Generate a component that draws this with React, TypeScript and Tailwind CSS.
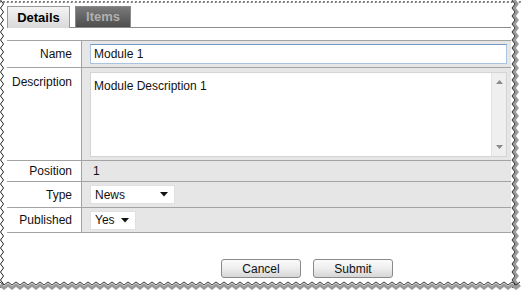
import { ReactNode } from "react";

const zig = (n: number, step: number, amp: number, vertical: boolean, offset: number) => {
    const pts: string[] = [];
    for (let i = 0; i <= n; i++) {
        const a = i * step;
        const b = offset + (i % 2 === 0 ? 0 : amp);
        pts.push(vertical ? `${b},${a}` : `${a},${b}`);
    }
    return pts.join(" ");
};

const Row = ({ label, top, children, h }: { label: string; top?: boolean; children: ReactNode; h: string }) => (
    <div className={`flex border-b border-[#a3a3a3] ${h}`}>
        <div className={`w-[75px] shrink-0 border-r border-[#a3a3a3] bg-white pr-[9px] text-right text-[12px] text-[#111] flex ${top ? "items-start pt-[5px]" : "items-center"}`}>
            <span className="w-full">{label}</span>
        </div>
        <div className="flex-1 bg-[#e6e6e6] pl-[8px] pr-[4px] flex items-center">{children}</div>
    </div>
);

const Select = ({ value, w }: { value: string; w: string }) => (
    <div className={`${w} h-[19px] bg-white border border-[#e0e0e0] flex items-center justify-between pl-[4px] pr-[6px] text-[12px] text-[#111]`}>
        <span>{value}</span>
        <svg width="8" height="5" viewBox="0 0 8 5"><path d="M0 0h8L4 4.5z" fill="#111" /></svg>
    </div>
);

const Button = ({ label }: { label: string }) => (
    <button className="w-[80px] h-[19px] rounded-[3px] border border-[#8a8a8a] bg-gradient-to-b from-[#fbfbfb] via-[#ededed] to-[#d6d6d6] text-[12px] text-[#111] leading-none">
        {label}
    </button>
);

const App = () => {
    return (
        <div className="relative w-[522px] h-[291px] bg-white overflow-hidden" style={{ fontFamily: '"Liberation Sans", Arial, sans-serif' }}>
            <div className="w-[504px] ml-[7px] pt-[6px]">
                <div className="flex items-end h-[22px] border-b border-[#8c8c8c]">
                    <div className="w-[63px] h-[22px] -mb-px border border-b-0 border-[#9a9a9a] bg-gradient-to-b from-[#f4f4f4] to-[#d9d9d9] flex items-center justify-center text-[13px] font-bold text-black">
                        Details
                    </div>
                    <div className="ml-[5px] w-[56px] h-[21px] border border-b-0 border-[#8a8a8a] bg-gradient-to-b from-[#7a7a7a] to-[#4e4e4e] flex items-center justify-center text-[13px] font-bold text-[#b0b0b0]">
                        Items
                    </div>
                </div>

                <div className="mt-[12px] border-t border-[#a3a3a3]">
                    <Row label="Name" h="h-[27px]">
                        <div className="w-full h-[20px] bg-white border border-[#a9c4e2] border-t-[#6f97c8] pl-[3px] flex items-center text-[12px] text-[#111]">Module 1</div>
                    </Row>
                    <Row label="Description" top h="h-[93px]">
                        <div className="w-full h-[85px] bg-white border border-[#d4d4d4] flex">
                            <div className="flex-1 pl-[3px] pt-[4px] text-[12px] text-[#111]">Module Description 1</div>
                            <div className="w-[15px] bg-[#efefef] border-l border-[#e4e4e4] flex flex-col items-center justify-between py-[7px]">
                                <svg width="7" height="4" viewBox="0 0 7 4"><path d="M0 4h7L3.5 0z" fill="#8a8a8a" /></svg>
                                <svg width="7" height="4" viewBox="0 0 7 4"><path d="M0 0h7L3.5 4z" fill="#8a8a8a" /></svg>
                            </div>
                        </div>
                    </Row>
                    <Row label="Position" h="h-[21px]">
                        <span className="pl-[3px] text-[12px] text-[#111]">1</span>
                    </Row>
                    <Row label="Type" h="h-[26px]">
                        <Select value="News" w="w-[85px]" />
                    </Row>
                    <Row label="Published" h="h-[25px]">
                        <Select value="Yes" w="w-[46px]" />
                    </Row>
                </div>

                <div className="flex justify-end gap-[12px] mt-[26px] pr-[118px]">
                    <Button label="Cancel" />
                    <Button label="Submit" />
                </div>
            </div>

            {/* torn paper edges */}
            <svg className="absolute left-0 top-0" width="522" height="291">
                <polyline points={zig(260, 4, 0, false, 2)} fill="none" stroke="#000" strokeWidth="1" strokeDasharray="2 2" transform="skewX(-30)" />
                <polyline points={zig(72, 4, 3, true, 0.5)} fill="none" stroke="#222" strokeWidth="1" />
                <polyline points={zig(72, 4, 3, true, 514)} fill="none" stroke="#9a9a9a" strokeWidth="3" />
                <polyline points={zig(72, 4, 3, true, 512)} fill="none" stroke="#333" strokeWidth="1" />
                <polyline points={zig(130, 4, 3, false, 285)} fill="none" stroke="#9a9a9a" strokeWidth="3" />
                <polyline points={zig(130, 4, 3, false, 282)} fill="none" stroke="#333" strokeWidth="1" />
            </svg>
        </div>
    );
};

export default App;
